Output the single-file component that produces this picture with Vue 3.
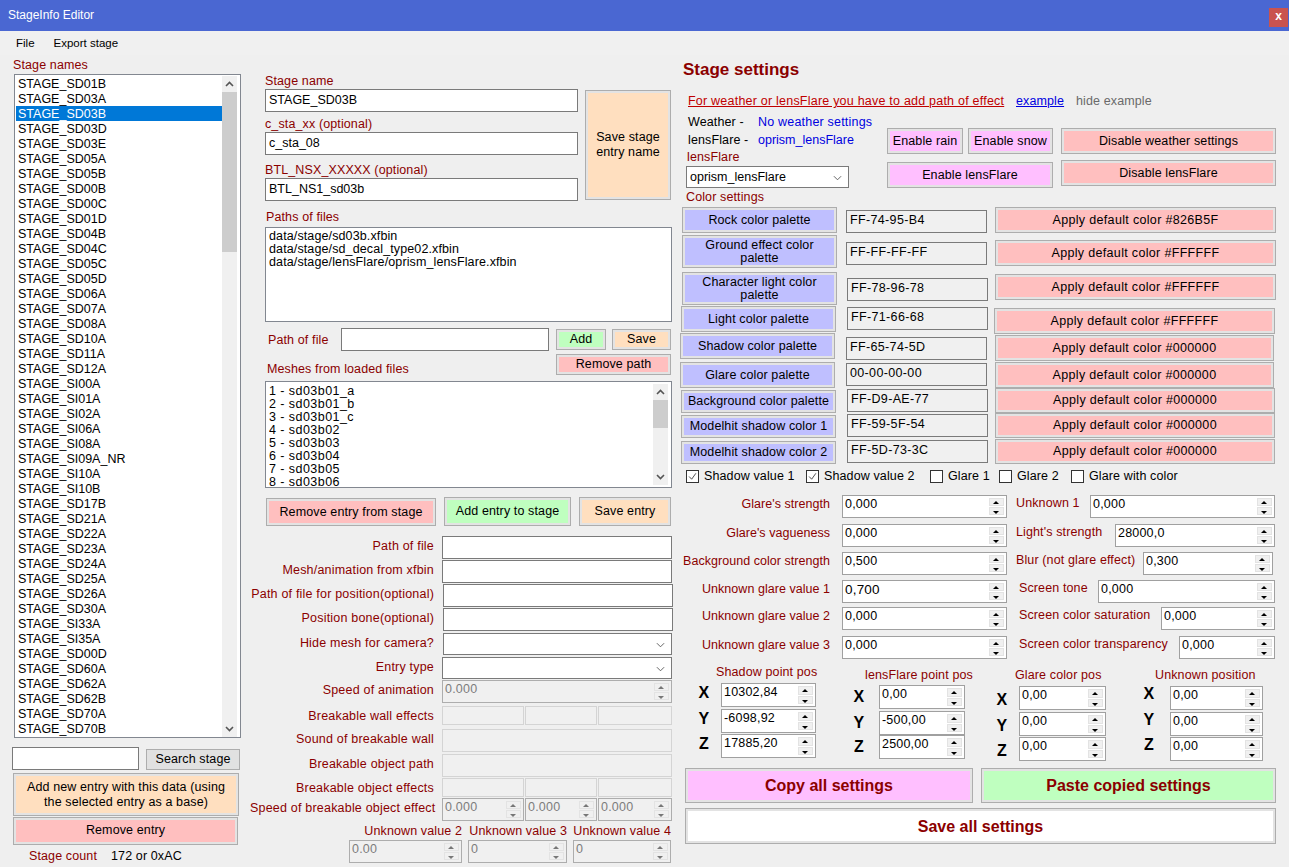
<script setup>
const names = ['SD01B','SD03A','SD03B','SD03D','SD03E','SD05A','SD05B','SD00B','SD00C','SD01D','SD04B','SD04C','SD05C','SD05D','SD06A','SD07A','SD08A','SD10A','SD11A','SD12A','SI00A','SI01A','SI02A','SI06A','SI08A','SI09A_NR','SI10A','SI10B','SD17B','SD21A','SD22A','SD23A','SD24A','SD25A','SD26A','SD30A','SI33A','SI35A','SD00D','SD60A','SD62A','SD62B','SD70A','SD70B'].map(n => 'STAGE_' + n)
const meshes = ['1 - sd03b01_a','2 - sd03b01_b','3 - sd03b01_c','4 - sd03b02','5 - sd03b03','6 - sd03b04','7 - sd03b05','8 - sd03b06']
const box = (l, t, w, h) => ({ marginLeft: l + 'px', marginTop: t + 'px', width: w + 'px', height: h + 'px' })

const formRows = [
  { label: 'Path of file', kind: 'input', h: 24, x: 0, w: 230 },
  { label: 'Mesh/animation from xfbin', kind: 'input', h: 24, x: 0, w: 230 },
  { label: 'Path of file for position(optional)', kind: 'input', h: 24, x: 1, w: 230 },
  { label: 'Position bone(optional)', kind: 'input', h: 25, x: 1, w: 230 },
  { label: 'Hide mesh for camera?', kind: 'select', h: 24, x: 1, w: 229 },
  { label: 'Entry type', kind: 'select', h: 23, x: 0, w: 230 },
  { label: 'Speed of animation', kind: 'spin', h: 26, x: 0, w: 230 },
  { label: 'Breakable wall effects', kind: 'tri', h: 23, x: 0, w: 230 },
  { label: 'Sound of breakable wall', kind: 'off', h: 25, x: 0, w: 230 },
  { label: 'Breakable object path', kind: 'off', h: 24, x: 0, w: 230 },
  { label: 'Breakable object effects', kind: 'tri', h: 20, x: 0, w: 230 },
  { label: 'Speed of breakable object effect', kind: 'spin3', h: 24, x: 0, w: 230 }
]

const colors = [
  { label: 'Rock color palette', hex: 'FF-74-95-B4', def: '#826B5F', h: 28, b: [2, 0, 155, 26], x: [0, 3], a: [0, 0, 281, 26] },
  { label: 'Ground effect color palette', hex: 'FF-FF-FF-FF', def: '#FFFFFF', h: 36, b: [2, 0, 155, 33], x: [0, 7], a: [0, 5, 281, 26], wrap: true },
  { label: 'Character light color palette', hex: 'FF-78-96-78', def: '#FFFFFF', h: 35, b: [2, 1, 155, 33], x: [1, 7], a: [0, 3, 281, 26], wrap: true },
  { label: 'Light color palette', hex: 'FF-71-66-68', def: '#FFFFFF', h: 27, b: [1, 0, 155, 26], x: [1, 1], a: [-1, 2, 281, 26] },
  { label: 'Shadow color palette', hex: 'FF-65-74-5D', def: '#000000', h: 29, b: [0, 0, 155, 26], x: [0, 4], a: [0, 2, 279, 26] },
  { label: 'Glare color palette', hex: '00-00-00-00', def: '#000000', h: 26, b: [0, 0, 155, 26], x: [0, 1], a: [0, 0, 279, 26] },
  { label: 'Background color palette', hex: 'FF-D9-AE-77', def: '#000000', h: 25, b: [1, 2, 155, 23], x: [1, 1], a: [0, 0, 280, 25] },
  { label: 'Modelhit shadow color 1', hex: 'FF-59-5F-54', def: '#000000', h: 26, b: [1, 2, 155, 23], x: [1, 1], a: [0, 0, 280, 25] },
  { label: 'Modelhit shadow color 2', hex: 'FF-5D-73-3C', def: '#000000', h: 27, b: [1, 2, 155, 23], x: [1, 1], a: [0, 0, 280, 25] }
]

const checks = [
  { label: 'Shadow value 1', on: true, w: 120 },
  { label: 'Shadow value 2', on: true, w: 124 },
  { label: 'Glare 1', on: false, w: 69 },
  { label: 'Glare 2', on: false, w: 72 },
  { label: 'Glare with color', on: false, w: 120 }
]

const spins = [
  { h: 29, l: "Glare's strength", v: '0,000', r: 'Unknown 1', rv: '0,000', rx: 1090, rw: 185 },
  { h: 28, l: "Glare's vagueness", v: '0,000', r: "Light's strength", rv: '28000,0', rx: 1115, rw: 160 },
  { h: 28, l: 'Background color strength', v: '0,500', r: 'Blur (not glare effect)', rv: '0,300', rx: 1143, rw: 130 },
  { h: 27, l: 'Unknown glare value 1', v: '0,700', r: 'Screen tone', rv: '0,000', rx: 1098, rw: 177, rl: 1019, big: true },
  { h: 29, l: 'Unknown glare value 2', v: '0,000', r: 'Screen color saturation', rv: '0,000', rx: 1161, rw: 114, rl: 1019 },
  { h: 23, l: 'Unknown glare value 3', v: '0,000', r: 'Screen color transparency', rv: '0,000', rx: 1179, rw: 96, rl: 1019 }
]

const groups = [
  { title: 'Shadow point pos', left: 0, w: 140, tl: 36, tt: 4, ax: -26, ay: 0, ix: 41, iw: 95, rows: [['X', '10302,84', 22], ['Y', '-6098,92', 48], ['Z', '17885,20', 73]] },
  { title: 'lensFlare point pos', left: 4, w: 140, tl: 41, tt: 7, ax: -29, ay: 2, ix: 55, iw: 86, rows: [['X', '0,00', 24], ['Y', '-500,00', 50], ['Z', '2500,00', 74]] },
  { title: 'Glare color pos', left: 0, w: 140, tl: 51, tt: 7, ax: -26, ay: 4, ix: 55, iw: 87, rows: [['X', '0,00', 25], ['Y', '0,00', 51], ['Z', '0,00', 76]] },
  { title: 'Unknown position', left: 6, w: 130, tl: 45, tt: 7, ax: -30, ay: -2, ix: 60, iw: 93, rows: [['X', '0,00', 25], ['Y', '0,00', 51], ['Z', '0,00', 76]] }
]
</script>

<template>
  <div class="app">
    <header class="titlebar">
      <span class="title">StageInfo Editor</span>
      <span class="close">x</span>
    </header>
    <nav class="menu"><span>File</span><span>Export stage</span></nav>

    <main class="body">
      <!-- left -->
      <section class="col left">
        <div class="lbl names-lbl">Stage names</div>
        <div class="listbox stages">
          <div class="items">
            <div v-for="n in names" :key="n" class="item" :class="{ sel: n === 'STAGE_SD03B' }">{{ n }}</div>
          </div>
          <div class="sb">
            <svg class="chev" viewBox="0 0 9 6"><path d="M1 5l3.5-3.5L8 5" /></svg>
            <div class="track"><div class="thumb stage-thumb"></div></div>
            <svg class="chev" viewBox="0 0 9 6"><path d="M1 1l3.5 3.5L8 1" /></svg>
          </div>
        </div>
        <div class="search">
          <div class="field search-in"></div>
          <button class="btn plain search-btn">Search stage</button>
        </div>
        <button class="btn peach add-new">Add new entry with this data (using the selected entry as a base)</button>
        <button class="btn pink remove-entry">Remove entry</button>
        <div class="count"><span class="lbl">Stage count</span><span>172 or 0xAC</span></div>
      </section>

      <!-- middle -->
      <section class="col mid">
        <div class="stage-head">
          <div class="head-fields">
            <div class="lbl h-lbl">Stage name</div>
            <div class="field">STAGE_SD03B</div>
            <div class="lbl h-lbl gap2">c_sta_xx (optional)</div>
            <div class="field">c_sta_08</div>
            <div class="lbl h-lbl gap3">BTL_NSX_XXXXX (optional)</div>
            <div class="field">BTL_NS1_sd03b</div>
          </div>
          <button class="btn peach save-name">Save stage entry name</button>
        </div>

        <div class="lbl paths-lbl">Paths of files</div>
        <div class="listbox paths">
          <div>data/stage/sd03b.xfbin</div>
          <div>data/stage/sd_decal_type02.xfbin</div>
          <div>data/stage/lensFlare/oprism_lensFlare.xfbin</div>
        </div>

        <div class="path-row">
          <div class="lbl path-lbl">Path of file</div>
          <div class="field path-in"></div>
          <button class="btn green add-btn">Add</button>
          <button class="btn peach save-btn">Save</button>
        </div>
        <div class="mesh-row">
          <div class="lbl mesh-lbl">Meshes from loaded files</div>
          <button class="btn pink rm-path">Remove path</button>
        </div>
        <div class="listbox meshes">
          <div class="items mesh-items">
            <div v-for="m in meshes" :key="m" class="mesh">{{ m }}</div>
          </div>
          <div class="sb">
            <svg class="chev" viewBox="0 0 9 6"><path d="M1 5l3.5-3.5L8 5" /></svg>
            <div class="track"><div class="thumb mesh-thumb"></div></div>
            <svg class="chev" viewBox="0 0 9 6"><path d="M1 1l3.5 3.5L8 1" /></svg>
          </div>
        </div>
        <div class="entry-btns">
          <button class="btn pink e1">Remove entry from stage</button>
          <button class="btn green e2">Add entry to stage</button>
          <button class="btn peach e3">Save entry</button>
        </div>

        <div class="form">
          <div v-for="r in formRows" :key="r.label" class="form-row" :style="{ height: r.h + 'px' }">
            <div class="lbl form-lbl">{{ r.label }}</div>
            <div class="form-val" :style="{ marginLeft: r.x + 'px', width: r.w + 'px' }">
              <div v-if="r.kind === 'input'" class="field full"></div>
              <div v-else-if="r.kind === 'select'" class="field full sel-box">
                <svg class="sel-chev" viewBox="0 0 10 6"><path d="M1 1l4 4 4-4" /></svg>
              </div>
              <div v-else-if="r.kind === 'spin'" class="spin off full">
                <span class="v">0.000</span>
                <span class="arr"><i class="up"></i><i class="dn"></i></span>
              </div>
              <div v-else-if="r.kind === 'off'" class="off-box full"></div>
              <div v-else-if="r.kind === 'tri'" class="tri">
                <div class="off-box"></div><div class="off-box"></div><div class="off-box"></div>
              </div>
              <div v-else class="tri">
                <div v-for="i in 3" :key="i" class="spin off">
                  <span class="v">0.000</span>
                  <span class="arr"><i class="up"></i><i class="dn"></i></span>
                </div>
              </div>
            </div>
          </div>
        </div>
        <div class="unknown">
          <div class="u u1">
            <div class="lbl u-lbl">Unknown value 2</div>
            <div class="spin off u-spin"><span class="v">0.00</span><span class="arr"><i class="up"></i><i class="dn"></i></span></div>
          </div>
          <div class="u u2">
            <div class="lbl u-lbl">Unknown value 3</div>
            <div class="spin off u-spin"><span class="v">0</span><span class="arr"><i class="up"></i><i class="dn"></i></span></div>
          </div>
          <div class="u u3">
            <div class="lbl u-lbl">Unknown value 4</div>
            <div class="spin off u-spin"><span class="v">0</span><span class="arr"><i class="up"></i><i class="dn"></i></span></div>
          </div>
        </div>
      </section>

      <!-- right -->
      <section class="col right">
        <h1 class="h">Stage settings</h1>
        <div class="note">
          <a class="warn">For weather or lensFlare you have to add path of effect</a>
          <a class="ex">example</a>
          <span class="hide">hide example</span>
        </div>
        <div class="weather">
          <div class="w-left">
            <div class="w-line"><span class="w-k">Weather -</span><span class="w-v">No weather settings</span></div>
            <div class="w-line"><span class="w-k">lensFlare -</span><span class="w-v tight">oprism_lensFlare</span></div>
            <div class="lbl lf-lbl">lensFlare</div>
            <div class="field lf-sel sel-box">oprism_lensFlare
              <svg class="sel-chev" viewBox="0 0 10 6"><path d="M1 1l4 4 4-4" /></svg>
            </div>
          </div>
          <div class="w-mid">
            <div class="w-pair">
              <button class="btn lilac rain">Enable rain</button>
              <button class="btn lilac snow">Enable snow</button>
            </div>
            <button class="btn lilac en-lens">Enable lensFlare</button>
          </div>
          <div class="w-right">
            <button class="btn pink dis-w">Disable weather settings</button>
            <button class="btn pink dis-l">Disable lensFlare</button>
          </div>
        </div>

        <div class="lbl color-lbl">Color settings</div>
        <div class="colors">
          <div v-for="c in colors" :key="c.label" class="c-row" :style="{ height: c.h + 'px' }">
            <div class="c-a">
              <button class="btn peri c-btn" :class="{ wrap: c.wrap }" :style="box(...c.b)">{{ c.label }}</button>
            </div>
            <div class="c-b">
              <div class="hex" :style="box(c.x[0], c.x[1], 141, 23)">{{ c.hex }}</div>
            </div>
            <div class="c-c">
              <button class="btn pink c-btn apply" :style="box(...c.a)">Apply default color {{ c.def }}</button>
            </div>
          </div>
        </div>

        <div class="checks">
          <label v-for="k in checks" :key="k.label" class="chk" :style="{ width: k.w + 'px' }">
            <span class="cb" :class="{ on: k.on }">
              <svg v-if="k.on" viewBox="0 0 13 13"><path d="M2.5 6.5l3 3.2 5-7" /></svg>
            </span>{{ k.label }}
          </label>
        </div>

        <div class="spin-rows">
          <div v-for="s in spins" :key="s.l" class="s-row" :style="{ height: s.h + 'px' }">
            <div class="s-left">
              <div class="lbl s-lbl">{{ s.l }}</div>
              <div class="spin on s-in" :class="{ big: s.big }">
                <span class="v">{{ s.v }}</span><span class="arr"><i class="up"></i><i class="dn"></i></span>
              </div>
            </div>
            <div class="s-right">
              <div class="lbl s-rlbl" :style="{ marginLeft: ((s.rl || 1016) - 1016) + 'px', width: (s.rx - (s.rl || 1016)) + 'px' }">{{ s.r }}</div>
              <div class="spin on" :style="{ width: s.rw + 'px' }">
                <span class="v">{{ s.rv }}</span><span class="arr"><i class="up"></i><i class="dn"></i></span>
              </div>
            </div>
          </div>
        </div>

        <div class="groups">
          <div v-for="g in groups" :key="g.title" class="group" :style="{ width: g.w + 'px', marginLeft: g.left + 'px' }">
            <div class="lbl g-title" :style="{ paddingLeft: g.tl + 'px', paddingTop: g.tt + 'px' }">{{ g.title }}</div>
            <div v-for="r in g.rows" :key="r[0]" class="g-row" :style="{ top: r[2] + 'px', left: g.ix + 'px', width: g.iw + 'px' }">
              <span class="axis" :style="{ left: g.ax + 'px', top: g.ay + 'px' }">{{ r[0] }}</span>
              <div class="spin on g-in">
                <span class="v">{{ r[1] }}</span><span class="arr"><i class="up"></i><i class="dn"></i></span>
              </div>
            </div>
          </div>
        </div>

        <div class="big-row">
          <button class="btn lilac big-btn copy">Copy all settings</button>
          <button class="btn green big-btn paste">Paste copied settings</button>
        </div>
        <button class="btn white big-btn save-all">Save all settings</button>
      </section>
    </main>
  </div>
</template>

<style>
html, body { margin: 0; background: #efefef; }
</style>

<style scoped>
.app { width: 1289px; height: 867px; overflow: hidden; background: #efefef; color: #000; font: 12.5px/15px "Liberation Sans", Arial, sans-serif; letter-spacing: .12px; }
.titlebar { height: 31px; background: #4a67d2; color: #fff; display: flex; align-items: flex-start; justify-content: space-between; padding: 0 1px 0 8px; box-sizing: border-box; font-size: 12px; letter-spacing: 0; }
.title { line-height: 31px; }
.close { width: 19px; height: 19px; background: #c9534f; text-align: center; line-height: 17px; font-size: 12px; font-weight: bold; margin-top: 8px; }
.menu { height: 24px; display: flex; align-items: center; gap: 19px; padding-left: 16px; font-size: 11.5px; letter-spacing: 0; background: #f0f0f0; }
.body { display: flex; height: 812px; }
.col { flex: none; }
.left { width: 230px; margin-left: 12px; }
.mid { width: 426px; margin-left: 8px; padding-left: 15px; box-sizing: border-box; }
.right { width: 609px; margin-left: 4px; position: relative; }
.lbl { color: #8b0000; }
button { font: inherit; letter-spacing: inherit; color: #000; padding: 0; cursor: default; }
.btn { display: block; box-sizing: border-box; border: 1px solid #adadad; box-shadow: inset 0 0 0 2px #e3e3e3; }
.plain { background: #e1e1e1; box-shadow: none; }
.peach { background: #ffdfbf; }
.pink { background: #ffbfbf; }
.green { background: #bfffbf; }
.lilac { background: #ffbfff; }
.peri { background: #bfbfff; }
.white { background: #fff; }
.field { box-sizing: border-box; height: 23px; background: #fff; border: 1px solid #7a7a7a; padding: 3px; line-height: 15px; white-space: nowrap; letter-spacing: 0; }
.listbox { box-sizing: border-box; background: #fff; border: 1px solid #828790; display: flex; }
.items { flex: 1; min-width: 0; }
.sb { width: 15px; flex: none; background: #f0f0f0; display: flex; flex-direction: column; align-items: center; }
.chev { width: 9px; height: 6px; fill: none; stroke: #555; stroke-width: 1.6; margin: 5px 0; flex: none; }
.track { flex: 1; align-self: stretch; }
.thumb { background: #cdcdcd; }

.names-lbl { margin: 3px 0 2px 1px; height: 14px; line-height: 14px; }
.stages { margin-left: 2px; width: 227px; height: 664px; padding: 1px 3px 0 1px; letter-spacing: 0; }
.item { height: 15px; line-height: 17px; padding-left: 2px; white-space: nowrap; }
.item.sel { background: #0078d7; color: #fff; }
.stage-thumb { height: 160px; }
.search { display: flex; margin-top: 9px; align-items: flex-end; }
.search-in { width: 127px; }
.search-btn { width: 94px; height: 21px; margin-left: 7px; background: #e1e1e1; }
.add-new { margin: 3px 0 0 1px; width: 226px; height: 43px; padding: 0 8px; }
.remove-entry { margin: 1px 0 0 1px; width: 225px; height: 28px; line-height: 13px; padding-bottom: 2px; }
.count { margin: 4px 0 0 17px; display: flex; gap: 14px; }

.stage-head { display: flex; margin-top: 19px; }
.head-fields { width: 313px; }
.h-lbl { height: 14px; line-height: 14px; margin-bottom: 1px; }
.gap2 { margin-top: 5px; margin-bottom: 1px; }
.gap3 { margin-top: 8px; margin-bottom: 1px; }
.save-name { width: 86px; height: 110px; margin: 16px 0 0 7px; padding: 0 6px; }
.paths-lbl { margin: 9px 0 3px 1px; height: 14px; line-height: 14px; }
.paths { width: 407px; height: 95px; flex-direction: column; padding: 2px 3px 0; line-height: 13px; }
.path-row { display: flex; align-items: center; margin-top: 6px; height: 23px; }
.path-lbl { width: 76px; padding: 1px 0 0 3px; box-sizing: border-box; }
.path-in { width: 208px; }
.add-btn { width: 50px; height: 21px; margin-left: 7px; }
.save-btn { width: 59px; height: 21px; margin-left: 6px; }
.mesh-row { display: flex; justify-content: space-between; width: 406px; margin-top: 3px; height: 21px; }
.mesh-lbl { margin: 8px 0 0 2px; }
.rm-path { width: 115px; height: 21px; }
.meshes { width: 407px; height: 107px; margin-top: 6px; padding: 3px 3px 0 3px; overflow: hidden; letter-spacing: .45px; }
.mesh-items { height: 104px; overflow: hidden; line-height: 13px; }
.mesh { height: 13px; }
.meshes .sb { height: 101px; margin-top: -1px; }
.mesh-thumb { height: 28px; }
.entry-btns { display: flex; margin: 9px 0 0 1px; }
.e1 { width: 170px; height: 28px; margin-top: 1px; }
.e2 { width: 127px; height: 29px; margin-left: 8px; }
.e3 { width: 92px; height: 29px; margin-left: 8px; }
.form { margin: 10px 0 0 -15px; }
.form-row { display: flex; }
.form-lbl { width: 184px; flex: none; text-align: right; line-height: 21px; white-space: nowrap; letter-spacing: .2px; }
.form-val { flex: none; position: relative; left: 8px; }
.full { width: 100%; box-sizing: border-box; }
.sel-box { position: relative; height: 22px; }
.sel-chev { position: absolute; right: 6px; top: 8px; width: 9px; height: 6px; fill: none; stroke: #555; stroke-width: 1; }
.off-box { box-sizing: border-box; height: 100%; max-height: 23px; background: #f0f0f0; border: 1px solid #d4d4d4; }
.tri { display: grid; grid-template-columns: 82px 72px 74px; gap: 1px; height: 100%; }
.tri .off-box { height: 19px; }

.spin { box-sizing: border-box; height: 23px; border: 1px solid #adadad; display: flex; justify-content: space-between; background: #fff; padding: 1px; letter-spacing: .2px; }
.spin.off { background: #f0f0f0; color: #7d7d7d; }
.spin.on { border-color: #a0a0a0; }
.spin .v { padding: 0 0 0 1px; line-height: 15px; }
.spin.big .v { font-size: 13.5px; }
.arr { width: 15px; display: flex; flex-direction: column; gap: 1px; flex: none; margin: 1px 1px 1px 0; }
.arr i { flex: 1; background: #f0f0f0; border: 1px solid #e3e3e3; position: relative; display: block; }
.arr i::after { content: ""; position: absolute; left: 3px; width: 0; height: 0; border-left: 3px solid transparent; border-right: 3px solid transparent; }
.arr .up::after { top: 2px; border-bottom: 3px solid #000; }
.arr .dn::after { top: 3px; border-top: 3px solid #000; }
.spin.off .arr i::after { border-top-color: #777; border-bottom-color: #777; }
.unknown { display: flex; margin: 2px 0 0 84px; }
.u { display: flex; flex-direction: column; align-items: flex-end; }
.u1 { width: 113px; }
.u2 { width: 99px; margin-left: 6px; }
.u3 { width: 98px; margin-left: 6px; }
.u-lbl { height: 16px; white-space: nowrap; }
.u-spin { width: 100%; }

.h { margin: 5px 0 0 3px; font-size: 17px; line-height: 20px; font-weight: bold; color: #8b0000; letter-spacing: 0; }
.note { display: flex; margin: 14px 0 0 8px; height: 14px; line-height: 14px; white-space: nowrap; }
.warn { color: #c00000; text-decoration: underline; width: 328px; letter-spacing: .22px; }
.ex { color: #0000e0; text-decoration: underline; width: 60px; }
.hide { color: #6a6a6a; }
.weather { display: flex; margin: 6px 0 0 6px; height: 76px; }
.w-left { width: 201px; flex: none; padding-top: 1px; box-sizing: border-box; }
.w-line { display: flex; height: 18px; line-height: 14px; }
.w-k { width: 70px; margin-left: 2px; }
.w-v { color: #0000e0; letter-spacing: .2px; }
.w-v.tight { letter-spacing: 0; }
.lf-lbl { height: 14px; line-height: 14px; margin: -1px 0 2px 1px; }
.lf-sel { width: 163px; height: 22px; position: relative; padding: 3px; }
.w-mid { width: 174px; flex: none; padding-top: 14px; box-sizing: border-box; }
.w-pair { display: flex; gap: 5px; height: 26px; }
.rain { width: 76px; }
.snow { width: 85px; }
.en-lens { width: 166px; height: 26px; margin-top: 8px; }
.w-right { padding-top: 14px; box-sizing: border-box; }
.dis-w { width: 215px; height: 26px; }
.dis-l { width: 215px; height: 26px; margin-top: 6px; }
.color-lbl { margin: 0 0 3px 6px; height: 14px; line-height: 14px; }
.c-row { display: flex; }
.c-a { width: 166px; flex: none; }
.c-b { width: 149px; flex: none; }
.c-c { flex: none; }
.c-btn { line-height: 13px; padding: 0 2px; white-space: nowrap; }
.c-btn.wrap { white-space: normal; padding: 0 10px; }
.apply { letter-spacing: .33px; }
.hex { box-sizing: border-box; background: #f0f0f0; border: 1px solid #7a7a7a; padding: 2px 3px; white-space: nowrap; letter-spacing: .35px; }
.checks { display: flex; margin: 1px 0 0 6px; height: 18px; align-items: center; }
.chk { display: flex; align-items: center; gap: 5px; white-space: nowrap; flex: none; }
.cb { width: 13px; height: 13px; box-sizing: border-box; border: 1px solid #333; background: #fff; display: block; flex: none; }
.cb svg { display: block; width: 11px; height: 11px; fill: none; stroke: #333; stroke-width: 1; }
.spin-rows { margin-top: 10px; }
.s-row { display: flex; }
.s-left { display: flex; width: 336px; flex: none; }
.s-lbl { width: 150px; flex: none; text-align: right; white-space: nowrap; line-height: 18px; letter-spacing: .04px; }
.s-in { width: 165px; margin-left: 12px; }
.s-right { display: flex; }
.s-rlbl { flex: none; white-space: nowrap; line-height: 17px; }
.groups { display: flex; height: 107px; margin-top: 2px; }
.group { position: relative; height: 100%; flex: none; }
.g-title { white-space: nowrap; height: 14px; line-height: 14px; }
.g-row { position: absolute; }
.g-in { height: 24px; width: 100%; }
.axis { position: absolute; font-size: 16px; font-weight: bold; line-height: 20px; width: 18px; text-align: center; }
.big-row { display: flex; gap: 8px; margin: 0 0 0 5px; }
.big-btn { font-size: 16px; font-weight: bold; color: #8b0000; letter-spacing: 0; }
.copy { width: 288px; height: 35px; }
.paste { width: 295px; height: 35px; }
.save-all { width: 591px; height: 36px; margin: 5px 0 0 5px; }
</style>
